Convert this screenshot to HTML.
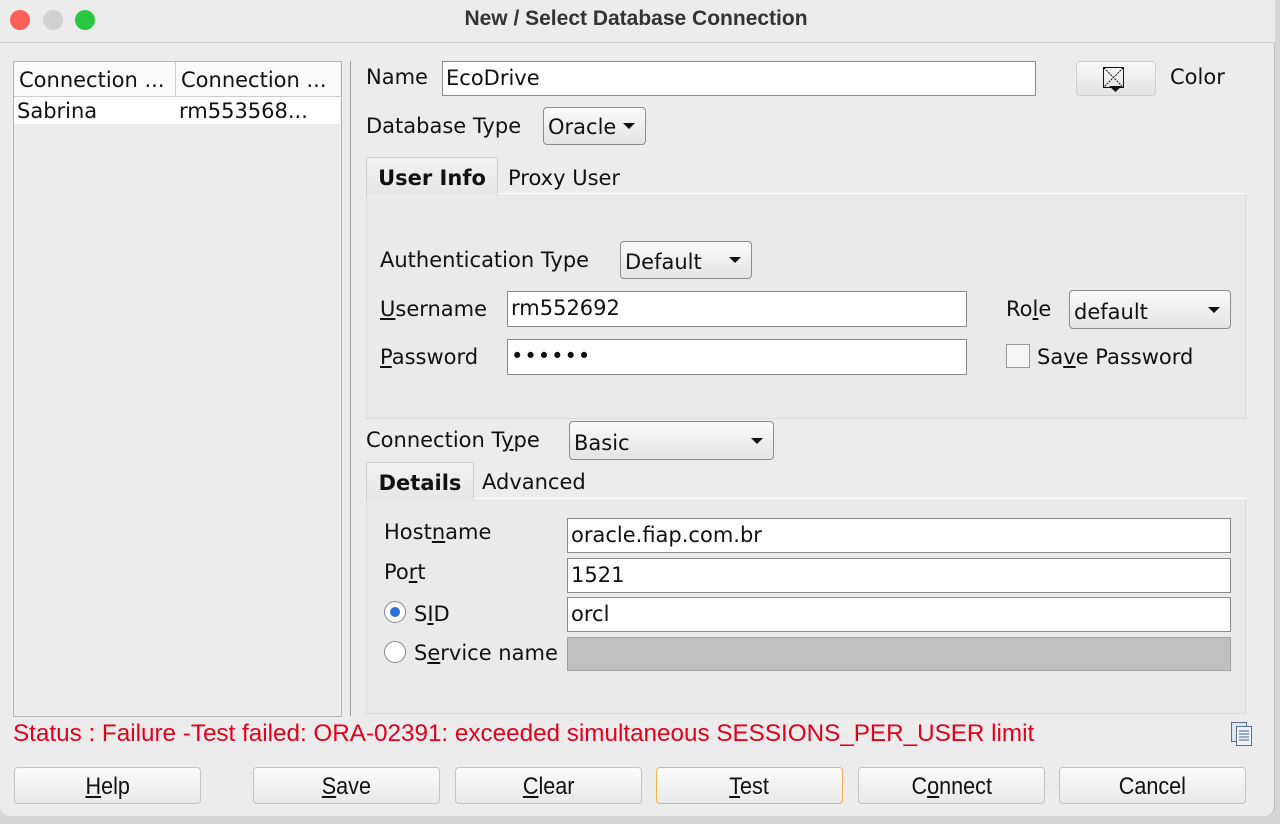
<!DOCTYPE html>
<html><head><meta charset="utf-8"><style>
*{box-sizing:border-box;margin:0;padding:0}
body{width:1280px;height:824px;background:#d6d6d6;font-family:"DejaVu Sans","Liberation Sans",sans-serif;font-size:21px;color:#111;position:relative;overflow:hidden}
.win{position:absolute;left:0;top:0;width:1275px;height:816px;background:#ececec;border-radius:0 0 10px 10px;border-right:1px solid #bbb}
.a{position:absolute;white-space:nowrap}
.title{left:0;top:0;width:1275px;height:43px;border-bottom:1px solid #d2d2d2;background:#ececec}
.dot{position:absolute;top:10px;width:20px;height:20px;border-radius:50%}
.in{position:absolute;background:#fff;border:1px solid #8a8a8a;padding-left:3px;line-height:33px}
.cb{position:absolute;border:1px solid #8c8c8c;border-radius:4px;background:linear-gradient(#fafafa,#e4e4e4);padding-left:4px}
.cb:after{content:"";position:absolute;right:10px;top:50%;margin-top:-3px;border-left:6px solid transparent;border-right:6px solid transparent;border-top:6px solid #111}
.panel{position:absolute;background:#eaeaea;border:1px solid #dcdcdc}
.tab{position:absolute;background:linear-gradient(#f2f2f2,#e6e6e6);border:1px solid #cfcfcf;border-bottom:none;font-weight:bold;text-align:center;border-radius:3px 3px 0 0}
.btn{position:absolute;top:767px;height:37px;width:187px;border:1px solid #c4c4c4;border-radius:4px;background:linear-gradient(#fbfbfb,#e9e9e9);text-align:center;line-height:37px;font-family:"Liberation Sans",sans-serif;font-size:24px}
.btn span{display:inline-block;transform:scaleX(.9)}
u{text-decoration:underline}
.radio{position:absolute;width:22px;height:22px;border-radius:50%;border:1px solid #888;background:#fff}
</style></head><body>
<div class="win">
<div class="a title"></div>
<div class="dot" style="left:10px;background:#fe5f57"></div>
<div class="dot" style="left:43px;background:#d0d0d0"></div>
<div class="dot" style="left:75px;background:#28c840"></div>
<div class="a" style="left:0;width:1272px;top:7px;text-align:center;font-weight:bold;font-size:21px;color:#333;font-family:'Liberation Sans',sans-serif">New / Select Database Connection</div>

<div class="a" style="left:13px;top:61px;width:329px;height:656px;background:#ececec;border:1px solid #b5b5b5"></div>
<div class="a" style="left:14px;top:62px;width:326px;height:35px;background:#fafafa;border-bottom:1px solid #ccc"></div>
<div class="a" style="left:175px;top:62px;width:1px;height:62px;background:#ccc"></div>
<div class="a" style="left:14px;top:97px;width:326px;height:27px;background:#fff"></div>
<div class="a" style="left:19px;top:68px">Connection ...</div>
<div class="a" style="left:181px;top:68px">Connection ...</div>
<div class="a" style="left:17px;top:99px">Sabrina</div>
<div class="a" style="left:179px;top:99px">rm553568...</div>
<div class="a" style="left:350px;top:61px;width:1px;height:655px;background:#9a9a9a"></div>

<div class="a" style="left:366px;top:65px">Name</div>
<div class="in" style="left:442px;top:61px;width:594px;height:35px">EcoDrive</div>
<div class="a" style="left:1076px;top:61px;width:80px;height:35px;border:1px solid #cfcfcf;border-radius:4px;background:linear-gradient(#f8f8f8,#e3e3e3)">
<svg width="80" height="35" style="position:absolute;left:-1px;top:-1px"><rect x="27.5" y="6.5" width="20" height="20" fill="none" stroke="#111"/><path d="M28 7L47 26M47 7L28 26" stroke="#111" stroke-dasharray="2 1"/><path d="M33 25h13l-6.5 6z" fill="#111"/></svg></div>
<div class="a" style="left:1170px;top:65px">Color</div>

<div class="a" style="left:366px;top:114px">Database Type</div>
<div class="cb" style="left:543px;top:107px;width:103px;height:38px;line-height:38px">Oracle</div>

<div class="panel" style="left:366px;top:193px;width:880px;height:226px"></div>
<div class="tab" style="left:366px;top:157px;width:132px;height:38px;line-height:40px">User Info</div>
<div class="a" style="left:497px;top:193px;width:749px;height:1px;background:#fff"></div>
<div class="a" style="left:508px;top:166px">Proxy User</div>

<div class="a" style="left:380px;top:248px">Authentication Type</div>
<div class="cb" style="left:620px;top:241px;width:132px;height:38px;line-height:40px">Default</div>
<div class="a" style="left:380px;top:297px"><u>U</u>sername</div>
<div class="in" style="left:507px;top:291px;width:460px;height:36px">rm552692</div>
<div class="a" style="left:380px;top:345px"><u>P</u>assword</div>
<div class="in" style="left:507px;top:339px;width:460px;height:36px;letter-spacing:1px">••••••</div>
<div class="a" style="left:1006px;top:297px">Ro<u>l</u>e</div>
<div class="cb" style="left:1069px;top:290px;width:162px;height:39px;line-height:42px">default</div>
<div class="a" style="left:1006px;top:344px;width:24px;height:24px;border:1px solid #999;background:#f6f6f6"></div>
<div class="a" style="left:1037px;top:345px">Sa<u>v</u>e Password</div>

<div class="a" style="left:366px;top:428px">Connection T<u>y</u>pe</div>
<div class="cb" style="left:569px;top:421px;width:205px;height:39px;line-height:42px">Basic</div>

<div class="panel" style="left:366px;top:498px;width:880px;height:216px"></div>
<div class="tab" style="left:366px;top:462px;width:108px;height:38px;line-height:40px">Details</div>
<div class="a" style="left:473px;top:498px;width:773px;height:1px;background:#fff"></div>
<div class="a" style="left:482px;top:470px">Advanced</div>

<div class="a" style="left:384px;top:520px">Host<u>n</u>ame</div>
<div class="in" style="left:567px;top:518px;width:664px;height:35px">oracle.fiap.com.br</div>
<div class="a" style="left:384px;top:560px">Po<u>r</u>t</div>
<div class="in" style="left:567px;top:558px;width:664px;height:35px">1521</div>
<div class="radio" style="left:384px;top:601px"><div style="position:absolute;left:5px;top:5px;width:10px;height:10px;border-radius:50%;background:#2b6fd8"></div></div>
<div class="a" style="left:414px;top:602px">S<u>I</u>D</div>
<div class="in" style="left:567px;top:597px;width:664px;height:35px">orcl</div>
<div class="radio" style="left:384px;top:641px"></div>
<div class="a" style="left:414px;top:641px">S<u>e</u>rvice name</div>
<div class="a" style="left:567px;top:637px;width:664px;height:34px;background:#c0c0c0;border:1px solid #a0a0a0"></div>

<div class="a" style="left:13px;top:720px;color:#e2001a;font-family:'Liberation Sans',sans-serif;font-size:24px;transform:scaleX(1.01);transform-origin:0 0">Status : Failure -Test failed: ORA-02391: exceeded simultaneous SESSIONS_PER_USER limit</div>
<svg class="a" style="left:1229px;top:721px" width="26" height="26"><rect x="2.5" y="1.5" width="15" height="19" fill="#dfe6f3" stroke="#5a6f93"/><rect x="7.5" y="5.5" width="15" height="19" fill="#eef2f9" stroke="#5a6f93"/><path d="M10 10h10M10 13h10M10 16h10M10 19h10" stroke="#44618f"/></svg>

<div class="btn" style="left:14px"><span><u>H</u>elp</span></div>
<div class="btn" style="left:253px"><span><u>S</u>ave</span></div>
<div class="btn" style="left:455px"><span><u>C</u>lear</span></div>
<div class="btn" style="left:656px;border:1px solid #f0b34a"><span><u>T</u>est</span></div>
<div class="btn" style="left:858px"><span>C<u>o</u>nnect</span></div>
<div class="btn" style="left:1059px"><span>Cancel</span></div>
</div>
</body></html>
